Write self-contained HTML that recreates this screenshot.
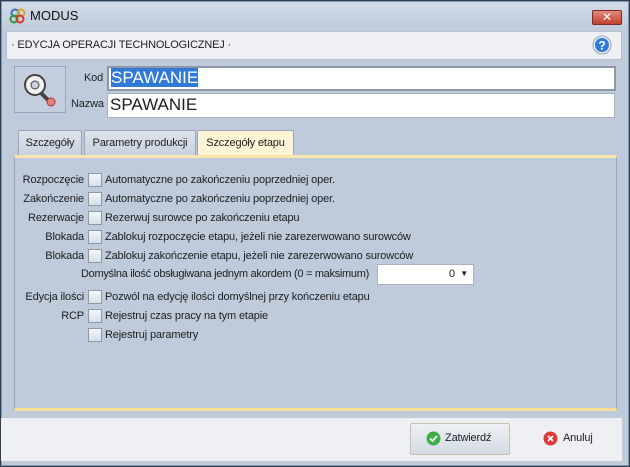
<!DOCTYPE html>
<html><head><meta charset="utf-8"><style>
*{box-sizing:border-box;margin:0;padding:0}
body{width:630px;height:467px;font-family:"Liberation Sans","DejaVu Sans",sans-serif;font-size:11px;letter-spacing:-0.15px;color:#1e1e1e;background:#2f3d52;position:relative;overflow:hidden}
.win{position:absolute;left:1px;top:1px;width:628px;height:465px;background:linear-gradient(#d3dbe6,#bfcadb 30px,#bfcadb);border:1px solid #8595ad}
.abs{position:absolute}
.title{left:30px;top:8px;font-size:13px;color:#111;letter-spacing:0}
.close{left:592px;top:10px;width:30px;height:15px;background:linear-gradient(#e08a7c,#c0402e);border:1px solid #7a2a22;border-radius:2px;color:#fff;font-size:12px;font-weight:bold;text-align:center;line-height:13px}
.hdr{left:6px;top:31px;width:616px;height:29px;background:#eef0f4;border:1px solid #b7c1cf}
.inp{background:#fff;border:1px solid #a6b1c2;font-size:17px;padding-left:2px;line-height:22px;letter-spacing:0}
.cb{position:absolute;left:88px;width:14px;height:14px;border:1px solid #8e99a8;background:linear-gradient(#f4f6f9,#d9dfe7)}
.lab{position:absolute;right:546px;text-align:right;white-space:nowrap}
.txt{position:absolute;left:105px;white-space:nowrap}
.tab{position:absolute;top:130px;height:25px;border:1px solid #9aa6b8;border-bottom:none;background:linear-gradient(#dde3ec,#c8d2df);text-align:center;line-height:24px;border-radius:2px 2px 0 0}
</style></head><body>
<div class="win"></div>
<svg class="abs" style="left:9px;top:8px" width="18" height="16" viewBox="0 0 18 16"><circle cx="6" cy="5" r="3.5" fill="none" stroke="#3b6fc4" stroke-width="2"/><circle cx="12" cy="5" r="3.5" fill="none" stroke="#d9a526" stroke-width="2"/><circle cx="5" cy="11" r="3.5" fill="none" stroke="#2e9a3e" stroke-width="2"/><circle cx="11" cy="11" r="3.5" fill="none" stroke="#d23c2a" stroke-width="2"/></svg>
<div class="abs title">MODUS</div>
<div class="abs close">✕</div>
<div class="abs hdr"><span class="abs" style="left:4px;top:7px;font-size:11px">· EDYCJA OPERACJI TECHNOLOGICZNEJ ·</span>
<svg class="abs" style="left:585px;top:3px" width="20" height="20"><circle cx="10" cy="10" r="9" fill="#e8edf3" stroke="#98a4b4"/><circle cx="10" cy="10" r="7" fill="#2e7ad6"/><text x="10" y="14.5" font-size="12" font-weight="bold" fill="#fff" text-anchor="middle" font-family="Liberation Sans">?</text></svg></div>
<div class="abs" style="left:14px;top:66px;width:52px;height:47px;border:1px solid #9aa6b8;background:#c3cede"></div>
<svg class="abs" style="left:22px;top:70px" width="38" height="40" viewBox="0 0 38 40"><circle cx="13" cy="15" r="10" fill="#f2f2f2" stroke="#444" stroke-width="2"/><circle cx="13" cy="15" r="4" fill="#c3cede" stroke="#444"/><path d="M19 23 L27 31" stroke="#444" stroke-width="4"/><circle cx="29" cy="32" r="4" fill="#e58080" stroke="#a33"/></svg>
<div class="abs" style="left:84px;top:72px">Kod</div>
<div class="abs" style="left:71px;top:98px">Nazwa</div>
<div class="abs inp" style="left:107px;top:66px;width:509px;height:25px;border:2px solid #8c97a8;line-height:20px"><span style="background:#3079d6;color:#fff">SPAWANIE</span></div>
<div class="abs inp" style="left:107px;top:93px;width:508px;height:25px">SPAWANIE</div>
<div class="tab" style="left:18px;width:64px">Szczegóły</div>
<div class="tab" style="left:84px;width:112px">Parametry produkcji</div>
<div class="tab" style="left:197px;width:97px;background:#fdf3d5;height:26px">Szczegóły etapu</div>
<div class="abs" style="left:14px;top:155px;width:603px;height:256px;background:#bfcadb;border:1px solid #9aa6b8;border-top:3px solid #fbe7ae;border-bottom:3px solid #fbdf97"></div>
<div class="lab" style="top:174px">Rozpoczęcie</div><div class="cb" style="top:173px"></div><div class="txt" style="top:174px">Automatyczne po zakończeniu poprzedniej oper.</div>
<div class="lab" style="top:193px">Zakończenie</div><div class="cb" style="top:192px"></div><div class="txt" style="top:193px">Automatyczne po zakończeniu poprzedniej oper.</div>
<div class="lab" style="top:212px">Rezerwacje</div><div class="cb" style="top:211px"></div><div class="txt" style="top:212px">Rezerwuj surowce po zakończeniu etapu</div>
<div class="lab" style="top:231px">Blokada</div><div class="cb" style="top:230px"></div><div class="txt" style="top:231px">Zablokuj rozpoczęcie etapu, jeżeli nie zarezerwowano surowców</div>
<div class="lab" style="top:250px">Blokada</div><div class="cb" style="top:249px"></div><div class="txt" style="top:250px">Zablokuj zakończenie etapu, jeżeli nie zarezerwowano surowców</div>
<div class="abs" style="left:81px;top:268px;white-space:nowrap;letter-spacing:-0.3px">Domyślna ilość obsługiwana jednym akordem (0 = maksimum)</div>
<div class="abs" style="left:377px;top:264px;width:97px;height:21px;background:#fff;border:1px solid #a6b1c2"><span class="abs" style="right:18px;top:3px">0</span><span class="abs" style="right:5px;top:4px;font-size:8px">▼</span></div>
<div class="lab" style="top:291px">Edycja ilości</div><div class="cb" style="top:290px"></div><div class="txt" style="top:291px">Pozwól na edycję ilości domyślnej przy kończeniu etapu</div>
<div class="lab" style="top:310px">RCP</div><div class="cb" style="top:309px"></div><div class="txt" style="top:310px">Rejestruj czas pracy na tym etapie</div>
<div class="cb" style="top:328px"></div><div class="txt" style="top:329px">Rejestruj parametry</div>
<div class="abs" style="left:1px;top:418px;width:621px;height:43px;background:#eef0f4"></div>
<div class="abs" style="left:410px;top:423px;width:100px;height:32px;border:1px solid #c9c2a8;border-radius:2px;background:linear-gradient(#eef0f4,#d4dbe5)"></div>
<svg class="abs" style="left:426px;top:431px" width="15" height="15"><circle cx="7.5" cy="7.5" r="7" fill="#3fae4a"/><path d="M4 7.5 L6.5 10 L11 5" fill="none" stroke="#fff" stroke-width="1.8"/></svg>
<div class="abs" style="left:445px;top:432px">Zatwierdź</div>
<svg class="abs" style="left:543px;top:431px" width="15" height="15"><circle cx="7.5" cy="7.5" r="7" fill="#e03a3a"/><path d="M5 5 L10 10 M10 5 L5 10" stroke="#fff" stroke-width="1.8"/></svg>
<div class="abs" style="left:563px;top:432px">Anuluj</div>
</body></html>
